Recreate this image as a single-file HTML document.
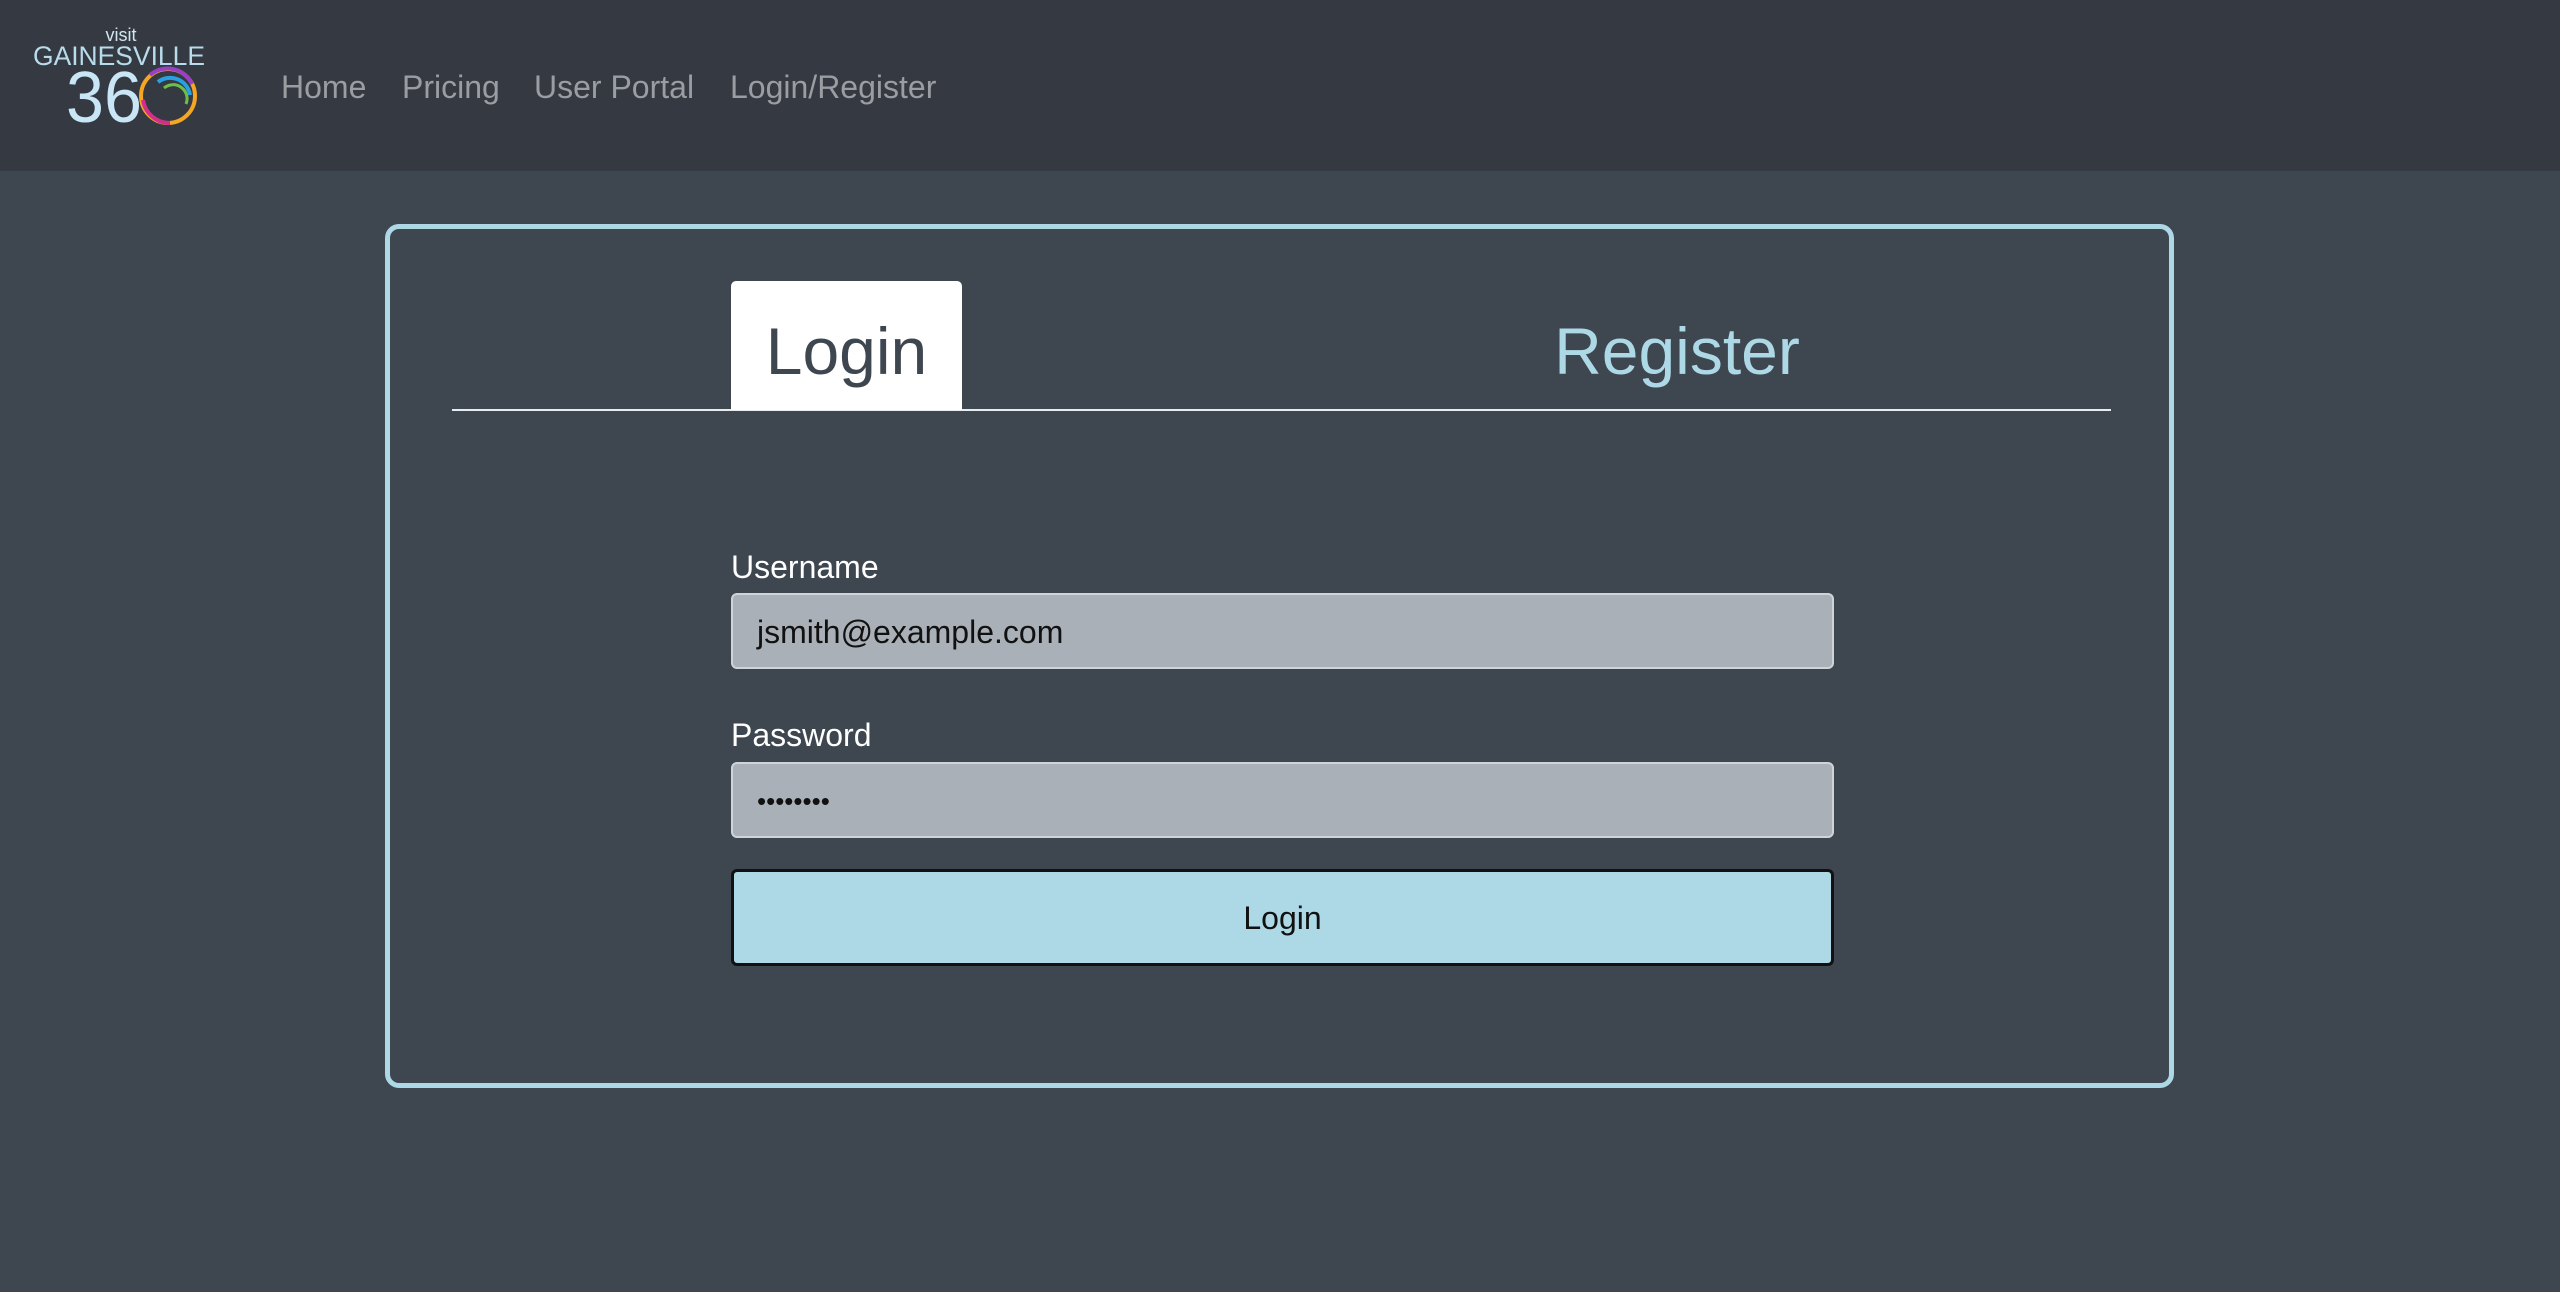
<!DOCTYPE html>
<html><head><meta charset="utf-8"><style>
*{margin:0;padding:0;box-sizing:border-box}
body{width:2560px;height:1292px;background:#3e4650;font-family:"Liberation Sans",sans-serif;position:relative;overflow:hidden}
.nav{position:absolute;left:0;top:0;width:2560px;height:171px;background:#353a42}
.nav a{position:absolute;top:67px;font-size:32px;color:#9a9da1;text-decoration:none;line-height:40px}
.card{position:absolute;left:385px;top:224px;width:1789px;height:864px;border:5px solid #add8e6;border-radius:14px}
.line{position:absolute;left:452px;top:409px;width:1659px;height:2px;background:#e8ecef}
.tab{position:absolute;left:731px;top:281px;width:231px;height:129px;background:#fff;border-radius:5px 5px 0 0;color:#3e4650;font-size:66px;text-align:center;line-height:140px}
.reg{position:absolute;left:1477px;top:281px;width:400px;text-align:center;color:#add8e6;font-size:66px;line-height:140px}
.lbl{position:absolute;left:731px;color:#fff;font-size:32px}
.inp{position:absolute;left:731px;width:1103px;height:76px;background:#a9b0b7;border:2px solid #d0d4d8;border-radius:6px;font-size:32px;color:#111;padding-left:24px;line-height:74px}
.btn{position:absolute;left:731px;top:869px;width:1103px;height:97px;background:#add8e6;border:3px solid #111;border-radius:6px;text-align:center;line-height:93px;font-size:32px;color:#111}
</style></head><body>
<div class="nav">
<svg width="220" height="140" style="position:absolute;left:0;top:0">
<text x="121" y="41" font-family="Liberation Sans" font-size="18" fill="#d0e6f0" text-anchor="middle">visit</text>
<text x="33" y="65" font-family="Liberation Sans" font-size="27" fill="#b8dcec" textLength="172" lengthAdjust="spacingAndGlyphs">GAINESVILLE</text>
<text x="66" y="122" font-family="Liberation Sans" font-size="72" fill="#c8e6f6" textLength="76" lengthAdjust="spacingAndGlyphs">36</text>
<circle cx="168" cy="96" r="27" fill="none" stroke="#f5a623" stroke-width="4"/>
<path d="M150 75 A27 27 0 0 1 192 84" fill="none" stroke="#9b3fc4" stroke-width="4"/>
<path d="M158 82 A20 20 0 0 1 190 95" fill="none" stroke="#2aa0e0" stroke-width="4"/>
<path d="M164 88 A14 14 0 0 1 186 104" fill="none" stroke="#6cc04a" stroke-width="3"/>
<path d="M143 100 A27 27 0 0 0 170 123" fill="none" stroke="#d0308a" stroke-width="4"/>
</svg>
<a style="left:281px">Home</a><a style="left:402px">Pricing</a><a style="left:534px">User Portal</a><a style="left:730px">Login/Register</a>
</div>
<div class="card"></div>
<div class="line"></div>
<div class="tab">Login</div>
<div class="reg">Register</div>
<div class="lbl" style="top:549px">Username</div>
<div class="inp" style="top:593px">jsmith@example.com</div>
<div class="lbl" style="top:717px">Password</div>
<div class="inp" style="top:762px;font-size:26px">••••••••</div>
<div class="btn">Login</div>
</body></html>
